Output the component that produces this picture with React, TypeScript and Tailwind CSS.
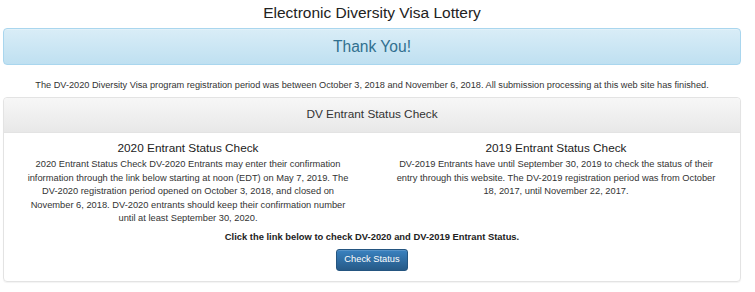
export default function App() {
  return (
    <div className="w-[755px] h-[292px] bg-white text-[#333] font-['Liberation_Sans',Arial,sans-serif]">
      <div className="ml-[3px] w-[738px] pt-[4px]">
        <h1 className="text-center text-[15.5px] leading-[18px] text-[#222]">Electronic Diversity Visa Lottery</h1>

        <div className="mt-[6px] h-[37px] flex items-center justify-center rounded-[4px] border border-[#a9d6ee] bg-gradient-to-b from-[#d9edf7] to-[#bfe0f1] shadow-[inset_0_1px_0_rgba(255,255,255,0.25)]">
          <span className="text-[15.6px] text-[#31708f]">Thank You!</span>
        </div>

        <p className="mt-[14px] text-center text-[9.2px] leading-[12px] text-[#333]">
          The DV-2020 Diversity Visa program registration period was between October 3, 2018 and November 6, 2018. All submission processing at this web site has finished.
        </p>

        <div className="mt-[6px] rounded-[4px] border border-[#e3e3e3] shadow-[0_1px_1px_rgba(0,0,0,0.05)]">
          <div className="h-[35px] flex items-center justify-center rounded-t-[4px] border-b border-[#e3e3e3] bg-gradient-to-b from-[#f7f7f7] to-[#e8e8e8]">
            <span className="text-[11.8px] text-[#333]">DV Entrant Status Check</span>
          </div>
          <div className="grid grid-cols-2 pt-[7px]">
            <div className="text-center px-[20px]">
              <h2 className="text-[11.8px] leading-[17px] text-[#222]">2020 Entrant Status Check</h2>
              <p className="mt-[1px] text-[9.3px] leading-[13.5px]">
                2020 Entrant Status Check DV-2020 Entrants may enter their confirmation information through the link below starting at noon (EDT) on May 7, 2019. The DV-2020 registration period opened on October 3, 2018, and closed on November 6, 2018. DV-2020 entrants should keep their confirmation number until at least September 30, 2020.
              </p>
            </div>
            <div className="text-center px-[20px]">
              <h2 className="text-[11.8px] leading-[17px] text-[#222]">2019 Entrant Status Check</h2>
              <p className="mt-[1px] text-[9.3px] leading-[13.5px]">
                DV-2019 Entrants have until September 30, 2019 to check the status of their entry through this website. The DV-2019 registration period was from October 18, 2017, until November 22, 2017.
              </p>
            </div>
          </div>
          <p className="mt-[4px] text-center text-[9.4px] leading-[13px] font-bold text-[#222]">
            Click the link below to check DV-2020 and DV-2019 Entrant Status.
          </p>
          <div className="flex justify-center mt-[6px] pb-[10px]">
            <button className="w-[72px] h-[22px] rounded-[3px] border border-[#245580] bg-gradient-to-b from-[#3a82c0] to-[#265a88] text-white text-[9.3px] shadow-[inset_0_1px_0_rgba(255,255,255,0.15)]">
              Check Status
            </button>
          </div>
        </div>
      </div>
    </div>
  );
}
